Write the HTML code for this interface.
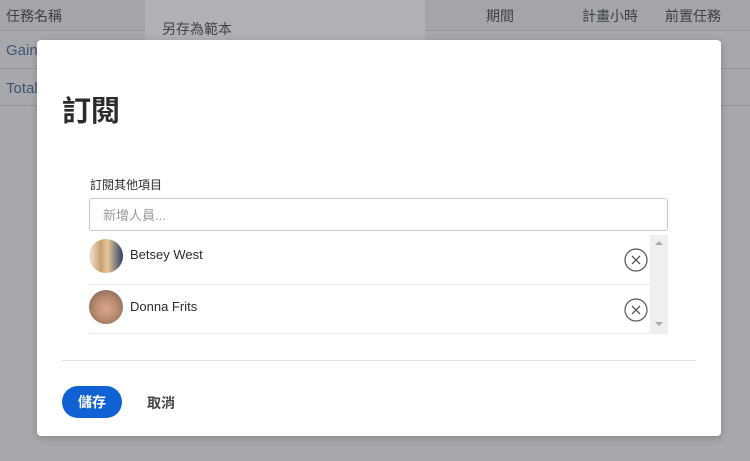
<!DOCTYPE html>
<html><head><meta charset="utf-8"><style>
body{margin:0;width:750px;height:461px;overflow:hidden;background:#a6a8ac;font-family:"Liberation Sans","Noto Sans CJK TC",sans-serif;position:relative}
.a{position:absolute}
.hd{color:#3c4046;font-size:14px}
</style></head><body>
<div class="a" style="left:0;top:0;width:750px;height:30px;background:#a3a5a9"></div>
<div class="a" style="left:0;top:30px;width:750px;height:1px;background:#95979b"></div>
<div class="a" style="left:0;top:68px;width:750px;height:1px;background:#95979b"></div>
<div class="a" style="left:0;top:105px;width:750px;height:1px;background:#95979b"></div>
<div class="a hd" style="left:6px;top:6px">任務名稱</div>
<div class="a hd" style="left:486px;top:6px">期間</div>
<div class="a hd" style="left:582px;top:6px">計畫小時</div>
<div class="a hd" style="left:665px;top:6px">前置任務</div>
<div class="a" style="left:6px;top:42px;color:#3f5577;font-size:15px">Gain</div>
<div class="a" style="left:6px;top:80px;color:#3f5577;font-size:15px">Total</div>
<div class="a" style="left:145px;top:0;width:280px;height:40px;background:#b0b1b4"></div>
<div class="a" style="left:162px;top:19px;font-size:14px;color:#404347">另存為範本</div>
<div class="a" style="left:37px;top:40px;width:684px;height:396px;background:#fff;border-radius:4px;box-shadow:0 2px 8px rgba(0,0,0,.2)"></div>
<div class="a" style="left:62px;top:88px;font-size:29px;font-weight:bold;color:#2b2b2b">訂閱</div>
<div class="a" style="left:90px;top:176px;font-size:12px;color:#2b2b2b">訂閱其他項目</div>
<div class="a" style="left:89px;top:198px;width:577px;height:31px;border:1px solid #c9c9c9;border-radius:3px"></div>
<div class="a" style="left:103px;top:205px;font-size:13px;color:#999">新增人員...</div>
<div class="a" style="left:650px;top:235px;width:18px;height:99px;background:#efefef"></div>
<div class="a" style="left:655px;top:241px;width:0;height:0;border:4px solid transparent;border-bottom-color:#aaa;border-top:0"></div>
<div class="a" style="left:655px;top:322px;width:0;height:0;border:4px solid transparent;border-top-color:#aaa;border-bottom:0"></div>
<div class="a" style="left:89px;top:284px;width:561px;height:1px;background:#e6e6e6"></div>
<div class="a" style="left:89px;top:333px;width:561px;height:1px;background:#e6e6e6"></div>
<div class="a" style="left:89px;top:239px;width:34px;height:34px;border-radius:50%;background:linear-gradient(90deg,#f1e6d2 0,#c8a070 35%,#e6c79a 55%,#2d3e66 100%)"></div>
<div class="a" style="left:89px;top:290px;width:34px;height:34px;border-radius:50%;background:radial-gradient(circle at 50% 55%,#d9a78e 0,#b98a70 45%,#6e5a4c 100%)"></div>
<div class="a" style="left:130px;top:247px;font-size:13px;color:#2b2b2b">Betsey West</div>
<div class="a" style="left:130px;top:299px;font-size:13px;color:#2b2b2b">Donna Frits</div>
<svg class="a" style="left:624px;top:248px" width="24" height="24"><circle cx="12" cy="12" r="11" fill="none" stroke="#555" stroke-width="1.2"/><path d="M8 8L16 16M16 8L8 16" stroke="#555" stroke-width="1.3"/></svg>
<svg class="a" style="left:624px;top:298px" width="24" height="24"><circle cx="12" cy="12" r="11" fill="none" stroke="#555" stroke-width="1.2"/><path d="M8 8L16 16M16 8L8 16" stroke="#555" stroke-width="1.3"/></svg>
<div class="a" style="left:62px;top:360px;width:634px;height:1px;background:#e3e3e3"></div>
<div class="a" style="left:62px;top:386px;width:60px;height:32px;border-radius:16px;background:#1062d4;color:#fff;font-size:14px;font-weight:bold;text-align:center;line-height:32px">儲存</div>
<div class="a" style="left:147px;top:393px;font-size:14px;font-weight:bold;color:#444">取消</div>
</body></html>
